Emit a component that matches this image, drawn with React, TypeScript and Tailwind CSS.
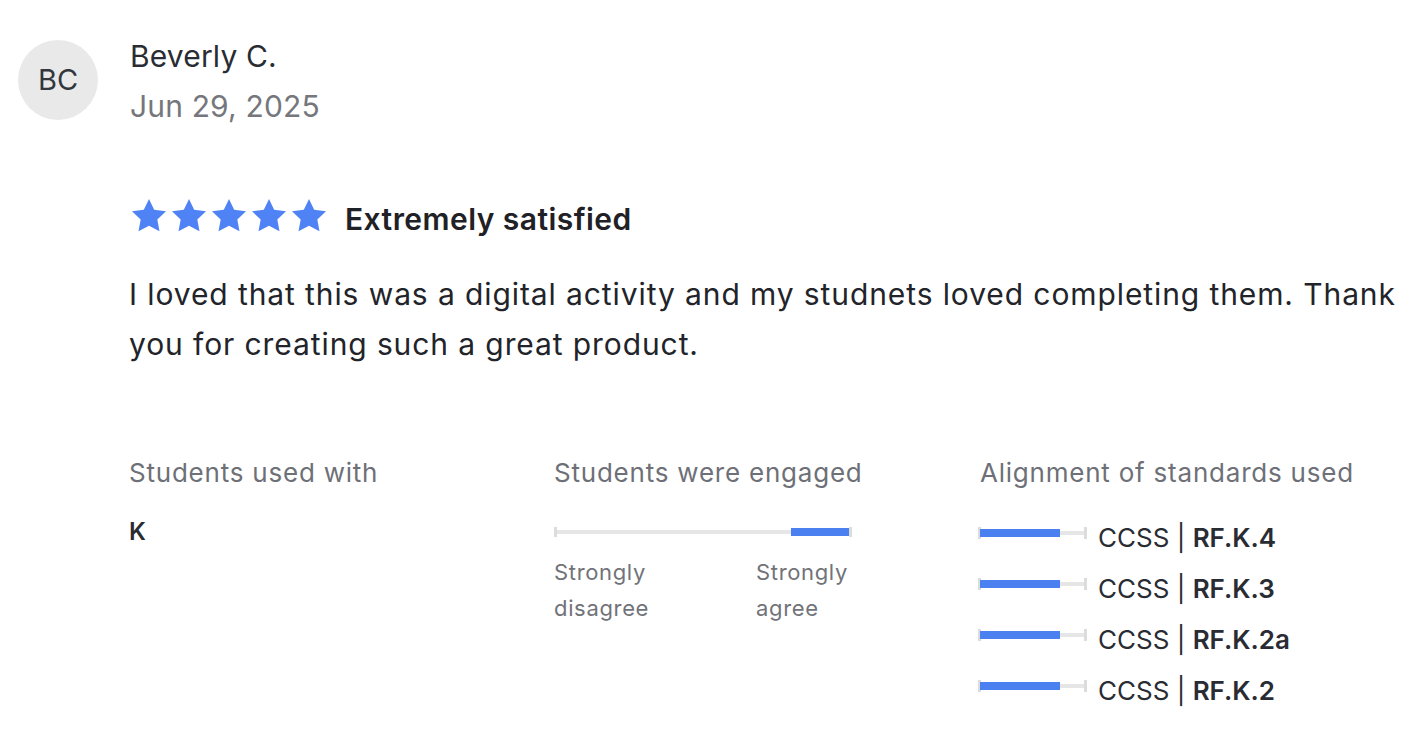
import React from "react";

const Star = () => (
  <svg viewBox="0 0 24 24" className="w-[40px] h-[40px]" fill="#4f83f5">
    <path d="M12 1.8l3.1 6.5 7.1.9-5.2 4.9 1.3 7.1L12 17.8l-6.3 3.4 1.3-7.1L1.8 9.2l7.1-.9z" />
  </svg>
);

const Slider = () => (
  <div className="relative w-[298px] h-[10px] flex items-center">
    <div className="w-[3px] h-[10px] bg-[#dcdcdc]" />
    <div className="flex-1 h-[4px] bg-[#e6e6e6]" />
    <div className="absolute right-[3px] w-[58px] h-[8px] bg-[#4a80f0]" />
    <div className="w-[3px] h-[10px] bg-[#dcdcdc]" />
  </div>
);

const StandardBar = () => (
  <div className="relative w-[109px] h-[12px] flex items-center mb-[10px]">
    <div className="w-[3px] h-[12px] bg-[#dcdcdc]" />
    <div className="flex-1 h-[4px] bg-[#e6e6e6]" />
    <div className="absolute left-[2px] w-[80px] h-[8px] bg-[#4a80f0]" />
    <div className="w-[3px] h-[12px] bg-[#dcdcdc]" />
  </div>
);

const standards = ["RF.K.4", "RF.K.3", "RF.K.2a", "RF.K.2"];

export default function App() {
  return (
    <div className="w-[1416px] h-[750px] bg-white font-['Inter',sans-serif] text-[#2a2c33] overflow-hidden">
      <div className="flex pl-[18px] pt-[40px]">
        <div className="w-[80px] h-[80px] rounded-full bg-[#e9e9e9] flex items-center justify-center text-[29px] text-[#33363d]">
          BC
        </div>
        <div className="ml-[32px] -mt-[5px] tracking-[0.01em]">
          <div className="text-[30px] leading-[42px]">Beverly C.</div>
          <div className="text-[30px] leading-[42px] mt-[8px] text-[#75777d]">Jun 29, 2025</div>
        </div>
      </div>

      <div className="pl-[129px]">
        <div className="flex items-center mt-[62px]">
          <div className="flex">
            <Star />
            <Star />
            <Star />
            <Star />
            <Star />
          </div>
          <div className="ml-[16px] pt-[8px] text-[30px] font-semibold tracking-[0.015em] text-[#1f2126]">
            Extremely satisfied
          </div>
        </div>

        <p className="mt-[27px] text-[30px] leading-[50px] tracking-[0.03em] text-[#22242a] pr-[20px]">
          I loved that this was a digital activity and my studnets loved completing them. Thank you
          for creating such a great product.
        </p>

        <div className="grid grid-cols-[425px_426px_1fr] mt-[86px]">
          <div>
            <div className="text-[26px] leading-[36px] tracking-[0.03em] text-[#6e7077]">Students used with</div>
            <div className="mt-[23px] text-[24px] font-semibold">K</div>
          </div>
          <div>
            <div className="text-[26px] leading-[36px] tracking-[0.03em] text-[#6e7077]">Students were engaged</div>
            <div className="mt-[36px]">
              <Slider />
            </div>
            <div className="flex w-[298px] mt-[17px] text-[22px] leading-[36px] tracking-[0.03em] text-[#717379]">
              <div className="w-[202px]">Strongly<br />disagree</div>
              <div>Strongly<br />agree</div>
            </div>
          </div>
          <div className="-ml-[2px]">
            <div className="ml-[2px] text-[26px] leading-[36px] tracking-[0.03em] text-[#6e7077]">
              Alignment of standards used
            </div>
            <div className="mt-[21px] flex flex-col">
              {standards.map((s) => (
                <div key={s} className="flex items-center h-[51px]">
                  <StandardBar />
                  <div className="ml-[11px] text-[26px]">
                    CCSS | <span className="font-semibold">{s}</span>
                  </div>
                </div>
              ))}
            </div>
          </div>
        </div>
      </div>
    </div>
  );
}
